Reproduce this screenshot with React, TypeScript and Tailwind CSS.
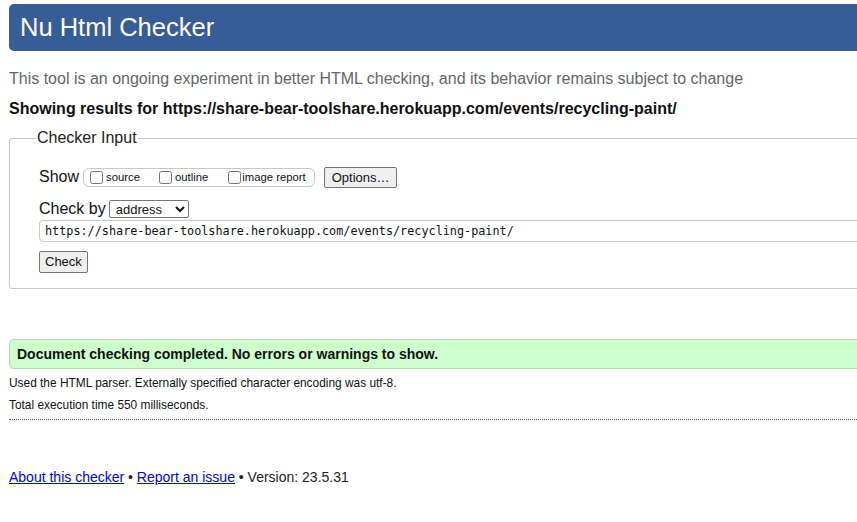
import React from 'react';

const App: React.FC = () => {
  return (
    <div className="w-[857px] h-[522px] overflow-hidden bg-white font-['Liberation_Sans',Arial,sans-serif] text-[#111]">
      <div className="w-[900px] pl-[9px] pt-[4px]">
        {/* Header */}
        <div className="h-[47px] bg-[#365d95] rounded-l-[5px] pl-[11px] flex items-center">
          <h1 className="text-[25.5px] text-white leading-none">Nu Html Checker</h1>
        </div>

        <p className="mt-[18px] text-[16px] text-[#666] leading-[19px]">
          This tool is an ongoing experiment in better HTML checking, and its behavior remains subject to change
        </p>
        <p className="mt-[11px] text-[16px] font-bold leading-[19px]">
          Showing results for https://share-bear-toolshare.herokuapp.com/events/recycling-paint/
        </p>

        {/* Checker input fieldset */}
        <fieldset className="mt-[8px] border border-[#c8c8c8] rounded-[3px] pl-[29px] pt-[15px] pb-[15px]">
          <legend className="text-[16px] text-[#222] px-[1px] -ml-[3px]">Checker Input</legend>

          <div className="flex items-center h-[24px]">
            <span className="text-[16px] mr-[4px]">Show</span>
            <div className="flex items-center h-[19px] border border-[#c8c8c8] rounded-[6px] pl-[6px] pr-[8px] text-[11.3px]">
              <label className="flex items-center">
                <input type="checkbox" className="w-[13px] h-[13px] mr-[3px]" />
                <span>source</span>
              </label>
              <label className="flex items-center ml-[19px]">
                <input type="checkbox" className="w-[13px] h-[13px] mr-[3px]" />
                <span>outline</span>
              </label>
              <label className="flex items-center ml-[20px]">
                <input type="checkbox" className="w-[13px] h-[13px] mr-[1px]" />
                <span>image report</span>
              </label>
            </div>
            <button className="ml-[9px] h-[21px] px-[7px] text-[13px] bg-[#efefef] border border-[#767676] rounded-[2px]">
              Options…
            </button>
          </div>

          <div className="flex items-center mt-[10px] h-[20px]">
            <span className="text-[16px] mr-[3px]">Check by</span>
            <select className="h-[18px] w-[80px] text-[13px] border border-[#767676] rounded-[2px] bg-white px-[2px]" defaultValue="address">
              <option value="address">address</option>
              <option value="file">file upload</option>
              <option value="text">text input</option>
            </select>
          </div>

          <input
            type="text"
            readOnly
            value="https://share-bear-toolshare.herokuapp.com/events/recycling-paint/"
            className="mt-[1px] block w-[900px] h-[22px] border border-[#c8c8c8] rounded-l-[4px] pl-[5px] text-[11.8px] font-['DejaVu_Sans_Mono',monospace] text-[#111]"
          />

          <button className="mt-[9px] h-[22px] px-[5px] text-[13px] bg-[#efefef] border border-[#767676] rounded-[2px]">
            Check
          </button>
        </fieldset>

        {/* Result */}
        <div className="mt-[50px] h-[30px] bg-[#ccffcc] border border-[#bcd7bc] rounded-l-[5px] pl-[7px] flex items-center">
          <span className="text-[14px] font-bold">Document checking completed. No errors or warnings to show.</span>
        </div>
        <p className="mt-[7px] text-[11.9px] leading-[14px]">Used the HTML parser. Externally specified character encoding was utf-8.</p>
        <p className="mt-[8px] text-[11.9px] leading-[14px]">Total execution time 550 milliseconds.</p>
        <div className="mt-[7px] w-[848px] border-t border-dotted border-[#555]" />

        {/* Footer */}
        <p className="mt-[47px] text-[14px] text-[#222]">
          <a href="#" className="text-[#0000ee] underline">About this checker</a>
          {' • '}
          <a href="#" className="text-[#0000ee] underline">Report an issue</a>
          {' • Version: 23.5.31'}
        </p>
      </div>
    </div>
  );
};

export default App;
